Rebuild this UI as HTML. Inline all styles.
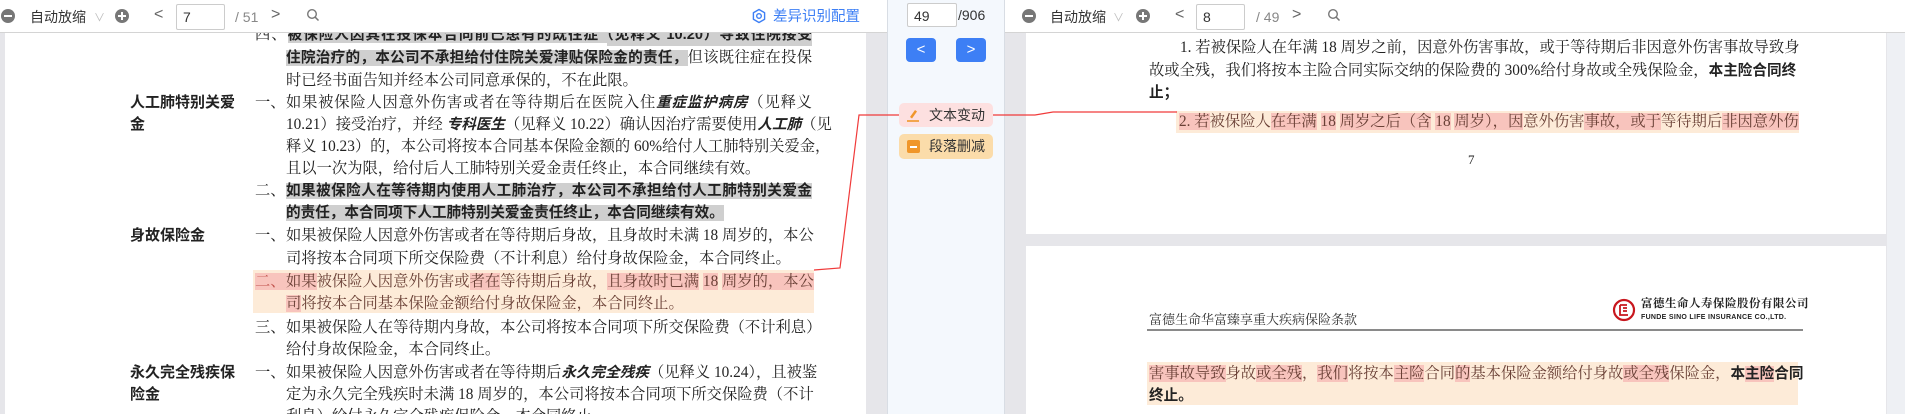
<!DOCTYPE html>
<html><head><meta charset="utf-8"><style>
*{margin:0;padding:0;box-sizing:border-box}
html,body{width:1905px;height:414px;overflow:hidden}
body{position:relative;background:#e6e6ea;font-family:"Liberation Sans","Noto Sans CJK SC",sans-serif}
.abs{position:absolute}
.tb{position:absolute;top:0;height:33px;background:#fff;border-bottom:1px solid #d4d4d4}
.tt{position:absolute;font-size:14px;color:#333;top:8px;line-height:18px}
.circ{position:absolute;width:14px;height:14px;border-radius:50%;background:#777;top:9px}
.circ:before{content:"";position:absolute;left:3px;top:6px;width:8px;height:2px;background:#fff}
.circ.p:after{content:"";position:absolute;left:6px;top:3px;width:2px;height:8px;background:#fff}
.inp{position:absolute;top:4px;height:26px;border:1px solid #ccc;border-radius:2px;background:#fff;font-size:14px;color:#333;padding:4px 6px;line-height:16px}
.page{position:absolute;background:#fff}
.ln{position:absolute;height:22px;line-height:22px;font-family:"Liberation Serif","Noto Serif CJK SC",serif;font-size:15.3px;color:#222;white-space:nowrap}
.j{text-align:justify;text-align-last:justify}
.g{background:#cfcfcf;font-family:"Liberation Sans","Noto Sans CJK SC",sans-serif;font-weight:bold;font-size:14.6px}
.b{font-family:"Liberation Sans","Noto Sans CJK SC",sans-serif;font-weight:bold;font-size:14.6px}
.lab{position:absolute;font-family:"Liberation Sans","Noto Sans CJK SC",sans-serif;font-weight:bold;font-size:15px;color:#222;line-height:22px}
i{font-family:"Liberation Sans","Noto Sans CJK SC",sans-serif;font-weight:bold;font-style:italic;font-size:14.6px}
.pk{background:#f8c4bd}
.og{position:absolute;background:#fdebd8}
.ot{color:#6a4036}
</style></head><body>

<!-- LEFT PANEL -->
<div class="page" style="left:5px;top:33px;width:861px;height:381px"></div>
<div class="og" style="left:253px;top:270px;width:561px;height:43px"></div>
<div class="abs" style="left:607px;top:24px;width:205px;height:22px;background:#cfcfcf"></div>
<div class="ln j" style="left:255px;top:24px;width:557px"><span>四、</span><span class="g">被保险人因其在投保本合同前已患有的既往症（见释义 10.20）导致住院接受</span></div>
<div class="ln j" style="left:286px;top:47px;width:526px"><span class="g">住院治疗的，本公司不承担给付住院关爱津贴保险金的责任，</span>但该既往症在投保</div>
<div class="ln" style="left:286px;top:70px">时已经书面告知并经本公司同意承保的，不在此限。</div>
<div class="lab" style="left:130px;top:92px">人工肺特别关爱<br>金</div>
<div class="ln" style="left:255px;top:92px">一、</div>
<div class="ln j" style="left:286px;top:92px;width:526px">如果被保险人因意外伤害或者在等待期后在医院入住<i>重症监护病房</i>（见释义</div>
<div class="ln j" style="left:286px;top:114px;width:526px">10.21）接受治疗，并经 <i>专科医生</i>（见释义 10.22）确认因治疗需要使用<i>人工肺</i>（见</div>
<div class="ln j" style="left:286px;top:136px;width:526px">释义 10.23）的，本公司将按本合同基本保险金额的 60%给付人工肺特别关爱金，</div>
<div class="ln" style="left:286px;top:158px">且以一次为限，给付后人工肺特别关爱金责任终止，本合同继续有效。</div>
<div class="ln" style="left:255px;top:180px">二、</div>
<div class="ln j" style="left:286px;top:180px;width:526px"><span class="g">如果被保险人在等待期内使用人工肺治疗，本公司不承担给付人工肺特别关爱金</span></div>
<div class="ln" style="left:286px;top:202px"><span class="g">的责任，本合同项下人工肺特别关爱金责任终止，本合同继续有效。</span></div>
<div class="lab" style="left:130px;top:225px">身故保险金</div>
<div class="ln" style="left:255px;top:225px">一、</div>
<div class="ln j" style="left:286px;top:225px;width:526px">如果被保险人因意外伤害或者在等待期后身故，且身故时未满 18 周岁的，本公</div>
<div class="ln" style="left:286px;top:248px">司将按本合同项下所交保险费（不计利息）给付身故保险金，本合同终止。</div>
<div class="ln ot" style="left:255px;top:271px;color:#c0504a"><span class="pk">二、</span></div>
<div class="ln j ot" style="left:286px;top:271px;width:526px"><span class="pk">如果</span>被保险人因意外伤害或<span class="pk">者在</span>等待期后身故，<span class="pk">且身故时已满</span> <span class="pk">18</span> <span class="pk">周岁的，本公</span></div>
<div class="ln ot" style="left:286px;top:293px"><span class="pk">司</span>将按本合同基本保险金额给付身故保险金，本合同终止。</div>
<div class="ln" style="left:255px;top:317px">三、</div>
<div class="ln j" style="left:286px;top:317px;width:526px">如果被保险人在等待期内身故，本公司将按本合同项下所交保险费（不计利息）</div>
<div class="ln" style="left:286px;top:339px">给付身故保险金，本合同终止。</div>
<div class="lab" style="left:130px;top:362px">永久完全残疾保<br>险金</div>
<div class="ln" style="left:255px;top:362px">一、</div>
<div class="ln j" style="left:286px;top:362px;width:526px">如果被保险人因意外伤害或者在等待期后<i>永久完全残疾</i>（见释义 10.24），且被鉴</div>
<div class="ln j" style="left:286px;top:384px;width:526px">定为永久完全残疾时未满 18 周岁的，本公司将按本合同项下所交保险费（不计</div>
<div class="ln" style="left:286px;top:406px">利息）给付永久完全残疾保险金，本合同终止。</div>

<div class="tb" style="left:0;width:887px">
 <div class="circ" style="left:1px"></div>
 <div class="tt" style="left:30px">自动放缩</div>
 <div class="tt" style="left:94px;color:#bbb;font-size:11px;top:9px">∨</div>
 <div class="circ p" style="left:115px"></div>
 <div class="tt" style="left:154px;color:#666;font-size:16px;top:6px">&lt;</div>
 <div class="inp" style="left:176px;width:49px">7</div>
 <div class="tt" style="left:235px;color:#888">/ 51</div>
 <div class="tt" style="left:271px;color:#666;font-size:16px;top:6px">&gt;</div>
 <svg class="abs" style="left:306px;top:8px" width="14" height="14" viewBox="0 0 14 14"><circle cx="6" cy="6" r="4.3" fill="none" stroke="#777" stroke-width="1.4"/><path d="M9.2 9.2L12.5 12.5" stroke="#777" stroke-width="1.5"/></svg>
 <svg class="abs" style="left:751px;top:8px" width="16" height="16" viewBox="0 0 16 16"><circle cx="8" cy="8" r="2.3" fill="none" stroke="#3d7ff5" stroke-width="1.4"/><path d="M8 1.5L13.6 4.75V11.25L8 14.5L2.4 11.25V4.75Z" fill="none" stroke="#3d7ff5" stroke-width="1.4" stroke-linejoin="round"/></svg>
 <div class="tt" style="left:773px;color:#3d7ff5;font-size:14.5px">差异识别配置</div>
</div>

<!-- MIDDLE -->
<div class="abs" style="left:887px;top:0;width:118px;height:414px;background:#f4f8fd;border-left:1px solid #d8dde4;border-right:1px solid #d8dde4"></div>
<div class="inp" style="left:907px;top:3px;width:50px;height:24px">49</div>
<div class="tt" style="left:958px;top:6px;font-size:14px">/906</div>
<div class="abs" style="left:906px;top:38px;width:30px;height:24px;background:#3d7ff5;border-radius:4px;color:#fff;text-align:center;font-size:15px;line-height:23px">&lt;</div>
<div class="abs" style="left:956px;top:38px;width:30px;height:24px;background:#3d7ff5;border-radius:4px;color:#fff;text-align:center;font-size:15px;line-height:23px">&gt;</div>
<div class="abs" style="left:899px;top:103px;width:94px;height:24px;background:#fde0e0;border-radius:5px;font-size:14px;color:#333;line-height:24px;padding-left:30px">文本变动</div>
<svg class="abs" style="left:906px;top:107px" width="14" height="16" viewBox="0 0 14 16"><path d="M4 10L9 3L11 4.5L6 11.5Z" fill="#f0962a"/><path d="M1 14H13" stroke="#f0962a" stroke-width="1.6"/></svg>
<div class="abs" style="left:899px;top:134px;width:94px;height:25px;background:#fbdcaa;border-radius:5px;font-size:14px;color:#333;line-height:25px;padding-left:30px">段落删减</div>
<div class="abs" style="left:907px;top:140px;width:13px;height:13px;background:#f0962a;border-radius:2px"><div style="margin:5.5px 3px;height:2px;background:#fff"></div></div>

<!-- RIGHT PANEL -->
<div class="page" style="left:1026px;top:33px;width:860px;height:201px"></div>
<div class="page" style="left:1026px;top:246px;width:860px;height:168px"></div>
<div class="abs" style="left:1887px;top:33px;width:18px;height:381px;background:#eef0f4"></div>
<div class="ln j" style="left:1180px;top:37px;width:613px">1. 若被保险人在年满 18 周岁之前，因意外伤害事故，或于等待期后非因意外伤害事故导致身</div>
<div class="ln j" style="left:1149px;top:60px;width:644px">故或全残，我们将按本主险合同实际交纳的保险费的 300%给付身故或全残保险金，<span class="b">本主险合同终</span></div>
<div class="ln" style="left:1149px;top:82px"><span class="b">止；</span></div>
<div class="og" style="left:1176px;top:111px;width:623px;height:22px"></div>
<div class="ln j ot" style="left:1179px;top:111px;width:617px"><span class="pk">2. 若</span>被保险人<span class="pk">在年满</span> <span class="pk">18</span> <span class="pk">周岁之后（含</span> <span class="pk">18</span> <span class="pk">周岁），因</span>意外伤害<span class="pk">事故，或</span><span class="pk">于</span>等待期后<span class="pk">非因意外伤</span></div>
<div class="ln" style="left:1468px;top:149px;font-size:13px">7</div>

<div class="ln" style="left:1149px;top:309px;font-size:13px;color:#333">富德生命华富臻享重大疾病保险条款</div>
<svg class="abs" style="left:1612px;top:298px" width="24" height="24" viewBox="0 0 24 24"><circle cx="12" cy="12" r="10" fill="none" stroke="#c8171e" stroke-width="2.2"/><path d="M8 7H15M8 7V17H16M11 10H15M11 13H15" stroke="#c8171e" stroke-width="1.8" fill="none"/></svg>
<div class="abs" style="left:1641px;top:297px;font-size:11.5px;font-weight:bold;color:#222;letter-spacing:0.5px;font-family:'Noto Serif CJK SC',serif;line-height:13px">富德生命人寿保险股份有限公司</div>
<div class="abs" style="left:1641px;top:314px;font-size:7px;font-weight:bold;color:#222;letter-spacing:0.3px;line-height:8px">FUNDE SINO LIFE INSURANCE CO.,LTD.</div>
<div class="abs" style="left:1147px;top:329px;width:656px;height:2px;background:#8a8a8a"></div>
<div class="og" style="left:1147px;top:362px;width:651px;height:43px"></div>
<div class="ln j ot" style="left:1149px;top:363px;width:646px"><span class="pk">害事故导致</span>身故<span class="pk">或全残</span>，<span class="pk">我们</span>将按本<span class="pk">主险</span>合同<span class="pk">的</span>基本保险金额给付身故<span class="pk">或全残</span>保险金，<span class="b" style="color:#222">本<span class="pk">主险</span>合同</span></div>
<div class="ln" style="left:1149px;top:385px"><span class="b">终止。</span></div>

<div class="tb" style="left:1005px;width:900px">
 <div class="circ" style="left:17px"></div>
 <div class="tt" style="left:45px">自动放缩</div>
 <div class="tt" style="left:108px;color:#bbb;font-size:11px;top:9px">∨</div>
 <div class="circ p" style="left:131px"></div>
 <div class="tt" style="left:170px;color:#666;font-size:16px;top:6px">&lt;</div>
 <div class="inp" style="left:191px;width:49px">8</div>
 <div class="tt" style="left:251px;color:#888">/ 49</div>
 <div class="tt" style="left:287px;color:#666;font-size:16px;top:6px">&gt;</div>
 <svg class="abs" style="left:322px;top:8px" width="14" height="14" viewBox="0 0 14 14"><circle cx="6" cy="6" r="4.3" fill="none" stroke="#777" stroke-width="1.4"/><path d="M9.2 9.2L12.5 12.5" stroke="#777" stroke-width="1.5"/></svg>
</div>

<!-- connector lines -->
<svg class="abs" style="left:0;top:0" width="1905" height="414"><polyline points="814,270 840,268 859,115 899,115" fill="none" stroke="#f03a3a" stroke-width="1.2"/><polyline points="993,115 1035,115 1053,112 1177,112" fill="none" stroke="#f03a3a" stroke-width="1.2"/></svg>
</body></html>
